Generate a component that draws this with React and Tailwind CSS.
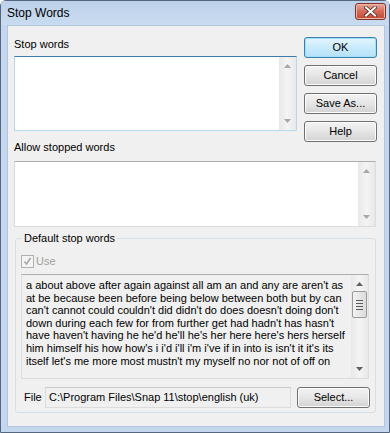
const font = { fontFamily: '"Liberation Sans", Arial, sans-serif' };

const lines = [
  "a about above after again against all am an and any are aren't as",
  "at be because been before being below between both but by can",
  "can't cannot could couldn't did didn't do does doesn't doing don't",
  "down during each few for from further get had hadn't has hasn't",
  "have haven't having he he'd he'll he's her here here's hers herself",
  "him himself his how how's i i'd i'll i'm i've if in into is isn't it it's its",
  "itself let's me more most mustn't my myself no nor not of off on",
];

function Arrow({ down, color = "#a7a7a7" }) {
  return (
    <svg width="7" height="4" viewBox="0 0 7 4">
      <polygon points={down ? "0,0 7,0 3.5,4" : "0,4 7,4 3.5,0"} fill={color} />
    </svg>
  );
}

function ScrollBar({ thumb }) {
  return (
    <div className="flex h-full w-[17px] flex-col items-center justify-between bg-gradient-to-r from-[#e8e8e8] via-[#f4f4f4] to-[#e8e8e8] py-[7px]">
      <Arrow color={thumb ? "#606060" : "#a7a7a7"} />
      {thumb && (
        <div className="mb-auto mt-[5px] flex h-[27px] w-[15px] flex-col items-center justify-center gap-[2px] rounded-[2px] border border-[#9a9a9a] bg-gradient-to-r from-[#f2f2f2] to-[#dcdcdc]">
          <div className="h-px w-[7px] bg-[#5a5a5a]" />
          <div className="h-px w-[7px] bg-[#5a5a5a]" />
          <div className="h-px w-[7px] bg-[#5a5a5a]" />
          <div className="h-px w-[7px] bg-[#5a5a5a]" />
        </div>
      )}
      <Arrow down color={thumb ? "#606060" : "#a7a7a7"} />
    </div>
  );
}

function Button({ children, primary, className = "" }) {
  return (
    <div
      className={
        "flex h-[21px] w-[73px] items-center justify-center rounded-[3px] border text-[11px] text-black " +
        (primary
          ? "border-[#3c7fb1] bg-gradient-to-b from-[#e5f5fd] via-[#c9ebfd] to-[#b4e0f9] shadow-[inset_0_0_0_1px_#9fe0fb] "
          : "border-[#707070] bg-gradient-to-b from-[#f3f3f3] via-[#e6e6e6] to-[#d2d2d2] shadow-[inset_0_0_0_1px_#fcfcfc] ") +
        className
      }
    >
      {children}
    </div>
  );
}

export default function App() {
  return (
    <div className="h-[433px] w-[390px] overflow-hidden" style={font}>
      <div className="flex h-[433px] w-[390px] flex-col rounded-t-[6px] border border-[#55677f] bg-[#c4d7ee]">
        <div className="flex h-[24px] items-center justify-between bg-gradient-to-b from-[#bdd1ea] to-[#c8dbf0] pl-[6px] pr-[3px]">
          <span className="text-[12px] leading-none text-black">Stop Words</span>
          <div className="-mt-[3px] flex h-[17px] w-[31px] items-center justify-center rounded-[3px] border border-[#7a3327] bg-gradient-to-b from-[#e8a699] via-[#d26a58] to-[#c2452f] shadow-[inset_0_0_0_1px_#f1b6a8]">
            <svg width="13" height="11" viewBox="0 0 13 11">
              <path d="M2 1.5 L11 9.5 M11 1.5 L2 9.5" stroke="#5d2a22" strokeWidth="3.6" strokeLinecap="square" />
              <path d="M2 1.5 L11 9.5 M11 1.5 L2 9.5" stroke="#ffffff" strokeWidth="2" strokeLinecap="square" />
            </svg>
          </div>
        </div>
        <div className="ml-[6px] mr-[4px] flex h-[402px] flex-col border border-[#b4c6dc] bg-[#f0f0f0] pl-[6px]">
          <div className="flex h-[105px] items-start">
            <div className="flex w-[283px] flex-col pt-[12px]">
              <div className="h-[13px] text-[11px] leading-[13px] text-black">Stop words</div>
              <div className="mt-[5px] flex h-[75px] justify-end border border-[#b7d9ed] border-t-[#3d7bad] bg-white">
                <ScrollBar />
              </div>
            </div>
            <div className="ml-[7px] flex flex-col gap-[7px] pt-[11px]">
              <Button primary>OK</Button>
              <Button>Cancel</Button>
              <Button>Save As...</Button>
              <Button>Help</Button>
            </div>
          </div>
          <div className="mt-[10px] h-[13px] text-[11px] leading-[13px] text-black">Allow stopped words</div>
          <div className="mt-[7px] flex h-[66px] w-[362px] justify-end border border-[#dcdcdc] border-t-[#adadad] bg-white">
            <ScrollBar />
          </div>
          <div className="relative ml-[1px] mt-[11px] h-[175px] w-[361px] rounded-[3px] border border-[#d5dfe5] pl-[5px]">
            <div className="absolute -top-[7px] left-[6px] bg-[#f0f0f0] px-[2px] text-[11px] leading-[13px] text-black">
              Default stop words
            </div>
            <div className="mt-[16px] flex h-[13px] items-center gap-[2px]">
              <div className="flex h-[13px] w-[13px] items-center justify-center border border-[#b1b1b1] bg-[#f4f4f4]">
                <svg width="9" height="9" viewBox="0 0 9 9">
                  <path d="M1.5 4.5 L3.5 7 L7.5 1" stroke="#a6a6a6" strokeWidth="1.6" fill="none" />
                </svg>
              </div>
              <span className="text-[11px] leading-[13px] text-[#a0a0a0]">Use</span>
            </div>
            <div className="mt-[6px] flex h-[105px] w-[348px] border border-[#dcdcdc] border-t-[#adadad] bg-[#f0f0f0]">
              <div className="flex-1 pl-[4px] pt-[4px] text-[11px] leading-[12.6px] text-black">
                {lines.map((l) => (
                  <div key={l} className="whitespace-nowrap">{l}</div>
                ))}
              </div>
              <ScrollBar thumb />
            </div>
            <div className="mt-[7px] flex items-center">
              <span className="w-[24px] pl-[3px] text-[11px] text-black">File</span>
              <div className="flex h-[21px] w-[246px] items-center border border-[#dcdcdc] border-t-[#c8c8c8] bg-[#f0f0f0] pl-[3px] text-[11px] text-black">
                C:\Program Files\Snap 11\stop\english (uk)
              </div>
              <Button className="ml-[6px] mt-[1px]">Select...</Button>
            </div>
          </div>
        </div>
      </div>
    </div>
  );
}
